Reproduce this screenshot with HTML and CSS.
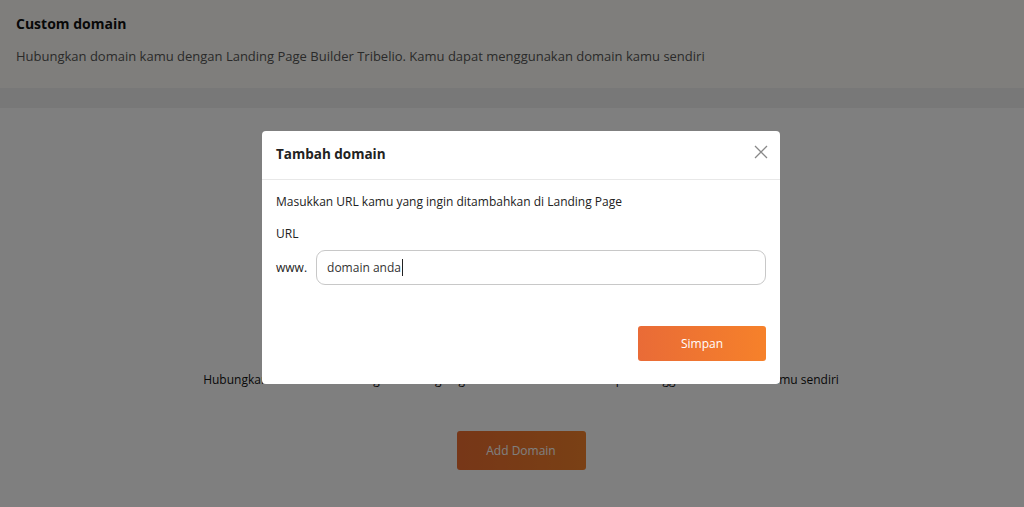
FILE: index.html
```html
<!DOCTYPE html>
<html lang="id">
<head>
  <meta charset="UTF-8" />
  <meta name="viewport" content="width=device-width, initial-scale=1.0" />
  <title>Custom domain</title>
  <link rel="stylesheet" href="styles.css">
</head>
<body>

  <header class="page-head">
    <h1>Custom domain</h1>
    <p>Hubungkan domain kamu dengan Landing Page Builder Tribelio. Kamu dapat menggunakan domain kamu sendiri</p>
  </header>

  <div class="band"></div>

  <main class="empty-state">
    <p>Hubungkan domain kamu dengan Landing Page Builder Tribelio. Kamu dapat menggunakan domain kamu sendiri</p>
    <button class="btn-add">Add Domain</button>
  </main>

  <div class="backdrop"></div>

  <div class="modal">
    <div class="modal-head">
      <h2>Tambah domain</h2>
      <button class="btn-close" aria-label="Tutup">
        <svg width="14" height="14" viewBox="0 0 14 14"><path d="M1 1L13 13M13 1L1 13" stroke="#888" stroke-width="1.3" fill="none"/></svg>
      </button>
    </div>
    <div class="modal-body">
      <p class="intro">Masukkan URL kamu yang ingin ditambahkan di Landing Page</p>
      <label for="url">URL</label>
      <div class="url-row">
        <span>www.</span>
        <div class="url-input" id="url">domain anda<i class="caret"></i></div>
      </div>
      <div class="actions">
        <button class="btn-save">Simpan</button>
      </div>
    </div>
  </div>

</body>
</html>
```

FILE: styles.css
```css
body {
  margin: 0;
  font-family: 'Open Sans', sans-serif;
  color: #222;
  background: #fff;
}

.page-head {
  background: #fffdf8;
  height: 88px;
  box-sizing: border-box;
  padding: 14px 16px 0;
}

.page-head h1 {
  font-size: 14px;
  font-weight: 700;
  margin: 0;
  line-height: 20px;
  color: #111;
}

.page-head p {
  font-size: 13px;
  margin: 12px 0 0;
  line-height: 20px;
  color: #555;
}

.band {
  height: 20px;
  background: #f0f0f0;
}

.empty-state {
  display: flex;
  flex-direction: column;
  align-items: center;
  padding: 262px 0 0 18px;
}

.empty-state p {
  font-size: 12px;
  line-height: 20px;
  margin: 0;
  color: #111;
}

.btn-add {
  margin-top: 41px;
  width: 129px;
  height: 39px;
  background: linear-gradient(90deg, #ee6e30, #f4812a);
  border: none;
  border-radius: 3px;
  color: #fff;
  font-family: 'Open Sans', sans-serif;
  font-size: 12px;
}

.backdrop {
  position: fixed;
  inset: 0;
  background: rgba(0, 0, 0, 0.5);
}

.modal {
  position: absolute;
  top: 131px;
  left: 262px;
  width: 518px;
  height: 253px;
  background: #fff;
  border-radius: 4px;
  box-sizing: border-box;
}

.modal-head {
  height: 48px;
  border-bottom: 1px solid #e8e8e8;
  display: flex;
  align-items: center;
  justify-content: space-between;
  padding: 0 14px;
}

.modal-head h2 {
  margin: 0 0 2px;
  font-size: 13.5px;
  font-weight: 700;
  color: #222;
}

.btn-close {
  background: none;
  border: none;
  padding: 0;
  margin: -6px -2px 0 0;
  display: flex;
}

.modal-body {
  padding: 12px 14px 0;
  font-size: 12px;
  color: #222;
}

.intro {
  margin: 0;
  line-height: 20px;
}

.modal-body label {
  display: block;
  margin-top: 12px;
  line-height: 20px;
}

.url-row {
  display: flex;
  align-items: center;
  gap: 9px;
  margin-top: 6px;
}

.url-input {
  flex: 1;
  height: 35px;
  box-sizing: border-box;
  border: 1px solid #c8c8c8;
  border-radius: 9px;
  padding: 0 10px;
  display: flex;
  align-items: center;
  color: #333;
}

.caret {
  display: inline-block;
  width: 1px;
  height: 17px;
  background: #222;
  margin-left: 1px;
}

.actions {
  display: flex;
  justify-content: flex-end;
  margin-top: 41px;
}

.btn-save {
  width: 128px;
  height: 35px;
  border: none;
  border-radius: 3px;
  background: linear-gradient(90deg, #e96b37, #f6812a);
  color: #fff;
  font-family: 'Open Sans', sans-serif;
  font-size: 12px;
}
```
